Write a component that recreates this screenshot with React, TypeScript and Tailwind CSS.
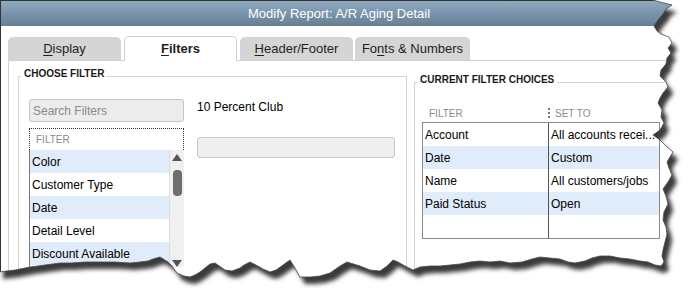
const filterList = [
  { label: 'Color', blue: true },
  { label: 'Customer Type', blue: false },
  { label: 'Date', blue: true },
  { label: 'Detail Level', blue: false },
  { label: 'Discount Available', blue: true },
]

const choices = [
  { filter: 'Account', value: 'All accounts recei...', blue: false },
  { filter: 'Date', value: 'Custom', blue: true },
  { filter: 'Name', value: 'All customers/jobs', blue: false },
  { filter: 'Paid Status', value: 'Open', blue: true },
]

// torn paper edge (inside region of the screenshot)
const tear = [
  [653, 0], [660, 2], [672, 5], [666, 9], [663, 14], [658, 20], [654, 26], [657, 31], [661, 34],
  [669, 37], [672, 43], [668, 48], [671, 53], [667, 58], [666, 64], [661, 70], [660, 76],
  [666, 82], [668, 87], [663, 93], [660, 98], [658, 103], [662, 110], [661, 117], [664, 123],
  [660, 130], [653, 135], [660, 140], [666, 146], [673, 152], [670, 157], [667, 162], [669, 168],
  [672, 175], [668, 182], [663, 189], [666, 196], [668, 204], [664, 212], [663, 220], [666, 227],
  [667, 234], [665, 242], [663, 250], [662, 256], [664, 262], [661, 266],
  [655, 265], [648, 262], [640, 261], [630, 259], [620, 258], [610, 256], [600, 256], [592, 258],
  [585, 261], [575, 263], [568, 262], [560, 259], [550, 258], [540, 257], [532, 259], [522, 262],
  [510, 263], [500, 261], [490, 262], [480, 261], [470, 262], [460, 264], [450, 265], [440, 266],
  [430, 266], [420, 267], [413, 270], [405, 266], [398, 262], [393, 260], [387, 266], [380, 271],
  [370, 270], [360, 266], [347, 262], [340, 266], [330, 273], [320, 276], [310, 277], [300, 277],
  [295, 268], [290, 260], [283, 265], [276, 270], [270, 272], [263, 269], [256, 265], [250, 262],
  [244, 265], [240, 268], [232, 271], [225, 270], [215, 263], [210, 264], [205, 268], [200, 272],
  [195, 275], [190, 277], [184, 276], [177, 273], [172, 266], [168, 262], [160, 257], [153, 259],
  [148, 261], [140, 262], [130, 263], [115, 262], [100, 262], [85, 262], [70, 263], [60, 263],
  [45, 265], [30, 267], [15, 270], [-2, 272], [-2, -2], [653, -2],
]
  .map(([x, y]) => `${x},${y}`)
  .join(' ')

function TornEdge() {
  return (
    <svg className="pointer-events-none absolute left-0 top-0" width="698" height="302">
      <defs>
        <mask id="outside">
          <rect x="0" y="0" width="698" height="302" fill="white" />
          <polygon points={tear} fill="black" />
        </mask>
        <filter id="blur" x="-10%" y="-10%" width="120%" height="120%">
          <feGaussianBlur stdDeviation="2.2" />
        </filter>
      </defs>
      <g mask="url(#outside)">
        <rect x="0" y="0" width="698" height="302" fill="white" />
        <polygon points={tear} transform="translate(5 7)" fill="#3a3a3a" filter="url(#blur)" />
      </g>
      <polygon points={tear} fill="none" stroke="#4a4a4a" strokeWidth="0.8" />
    </svg>
  )
}

function Tab({ active, children }: { active?: boolean; children: React.ReactNode }) {
  return (
    <div
      className={[
        'flex items-center justify-center rounded-t-[5px] text-[13px] text-[#1e1e1e]',
        active
          ? 'h-[25px] border border-b-0 border-[#cfcfcf] bg-white font-bold'
          : 'mt-[1px] h-[23px] bg-[#d5d5d5]',
      ].join(' ')}
    >
      {children}
    </div>
  )
}

function Legend({ children }: { children: React.ReactNode }) {
  return (
    <div className="-mt-[9px] ml-[2px] w-fit bg-white px-[3px] text-[10px] font-bold leading-[12px] text-[#1a1a1a]">
      {children}
    </div>
  )
}

export default function App() {
  return (
    <div className="relative h-[302px] w-[698px] overflow-hidden bg-white font-['Liberation_Sans',Arial,sans-serif]">
      <div className="h-[320px] w-[720px] border-l border-t border-[#333]">
        <div className="flex h-[25px] items-center bg-gradient-to-b from-[#8eaac1] to-[#667f95] pl-[247px] text-[13px] text-white">
          Modify Report: A/R Aging Detail
        </div>

        <div className="relative z-10 -mb-px ml-[7px] mt-[10px] flex h-[25px] items-start">
          <div className="w-[113px]">
            <Tab>
              <span className="underline underline-offset-2">D</span>isplay
            </Tab>
          </div>
          <div className="ml-[3px] w-[113px]">
            <Tab active>
              <span className="underline underline-offset-2">F</span>ilters
            </Tab>
          </div>
          <div className="ml-[3px] w-[113px]">
            <Tab>
              <span className="underline underline-offset-2">H</span>eader/Footer
            </Tab>
          </div>
          <div className="ml-[2px] w-[115px]">
            <Tab>
              Fo<span className="underline underline-offset-2">n</span>ts &amp; Numbers
            </Tab>
          </div>
        </div>

        <div className="ml-[7px] flex h-[260px] border-l border-t border-[#d2d2d2]">
          <div className="ml-[9px] mt-[15px] h-[240px] w-[389px] border-x border-t border-[#d4d4d4]">
            <Legend>CHOOSE FILTER</Legend>
            <div className="mt-[19px] flex gap-[13px] pl-[10px]">
              <div className="w-[155px]">
                <input
                  readOnly
                  placeholder="Search Filters"
                  className="block h-[23px] w-full rounded-[3px] border border-[#c5c5c5] bg-[#ececec] pl-[3px] text-[12px] outline-none placeholder:text-[#8a8a8a]"
                />
                <div className="mt-[6px] flex h-[22px] items-center border-x border-t border-dotted border-[#333] pl-[6px] text-[10px] text-[#8a8a8a]">
                  FILTER
                </div>
                <div className="flex border-l border-[#7a7a7a]">
                  <div className="w-[139px]">
                    {filterList.map((f) => (
                      <div
                        key={f.label}
                        className={[
                          'flex h-[23px] items-center pl-[2px] text-[12px] text-black',
                          f.blue ? 'bg-[#e1ecfb]' : 'bg-white',
                        ].join(' ')}
                      >
                        {f.label}
                      </div>
                    ))}
                  </div>
                  <div className="relative flex w-[15px] flex-col items-center border-l border-[#dedede] bg-[#f0f0f0]">
                    <div className="mt-[4px] h-0 w-0 border-x-[5px] border-b-[7px] border-x-transparent border-b-[#555]" />
                    <div className="mt-[9px] h-[26px] w-[9px] rounded-[4px] bg-[#6e6e6e]" />
                    <div className="mt-[64px] h-0 w-0 border-x-[5px] border-t-[7px] border-x-transparent border-t-[#555]" />
                  </div>
                </div>
              </div>
              <div className="w-[198px]">
                <div className="text-[12px] leading-[16px] text-black">10 Percent Club</div>
                <div className="mt-[22px] h-[21px] rounded-[3px] border border-[#c8c8c8] bg-[#efefef]" />
              </div>
            </div>
          </div>

          <div className="ml-[7px] mt-[21px] h-[240px] flex-1 border-l border-t border-[#d4d4d4]">
            <Legend>CURRENT FILTER CHOICES</Legend>
            <div className="ml-[7px] mt-[18px] flex h-[18px] w-[238px] items-center text-[10px] text-[#8a8a8a]">
              <div className="w-[126px] pl-[7px]">FILTER</div>
              <div className="h-[10px] border-l-2 border-dotted border-[#777]" />
              <div className="pl-[5px]">SET TO</div>
            </div>
            <div className="ml-[7px] flex w-[238px] border border-[#8a8a8a] text-[12px] text-black">
              <div className="w-[126px] border-r border-[#555]">
                {choices.map((c) => (
                  <div
                    key={c.filter}
                    className={['flex h-[23px] items-center pl-[2px]', c.blue ? 'bg-[#e1ecfb]' : 'bg-white'].join(' ')}
                  >
                    {c.filter}
                  </div>
                ))}
                <div className="h-[23px]" />
              </div>
              <div className="flex-1">
                {choices.map((c) => (
                  <div
                    key={c.filter}
                    className={[
                      'flex h-[23px] items-center whitespace-nowrap pl-[2px]',
                      c.blue ? 'bg-[#e1ecfb]' : 'bg-white',
                    ].join(' ')}
                  >
                    {c.value}
                  </div>
                ))}
                <div className="h-[23px]" />
              </div>
            </div>
          </div>
        </div>
      </div>
      <TornEdge />
    </div>
  )
}
